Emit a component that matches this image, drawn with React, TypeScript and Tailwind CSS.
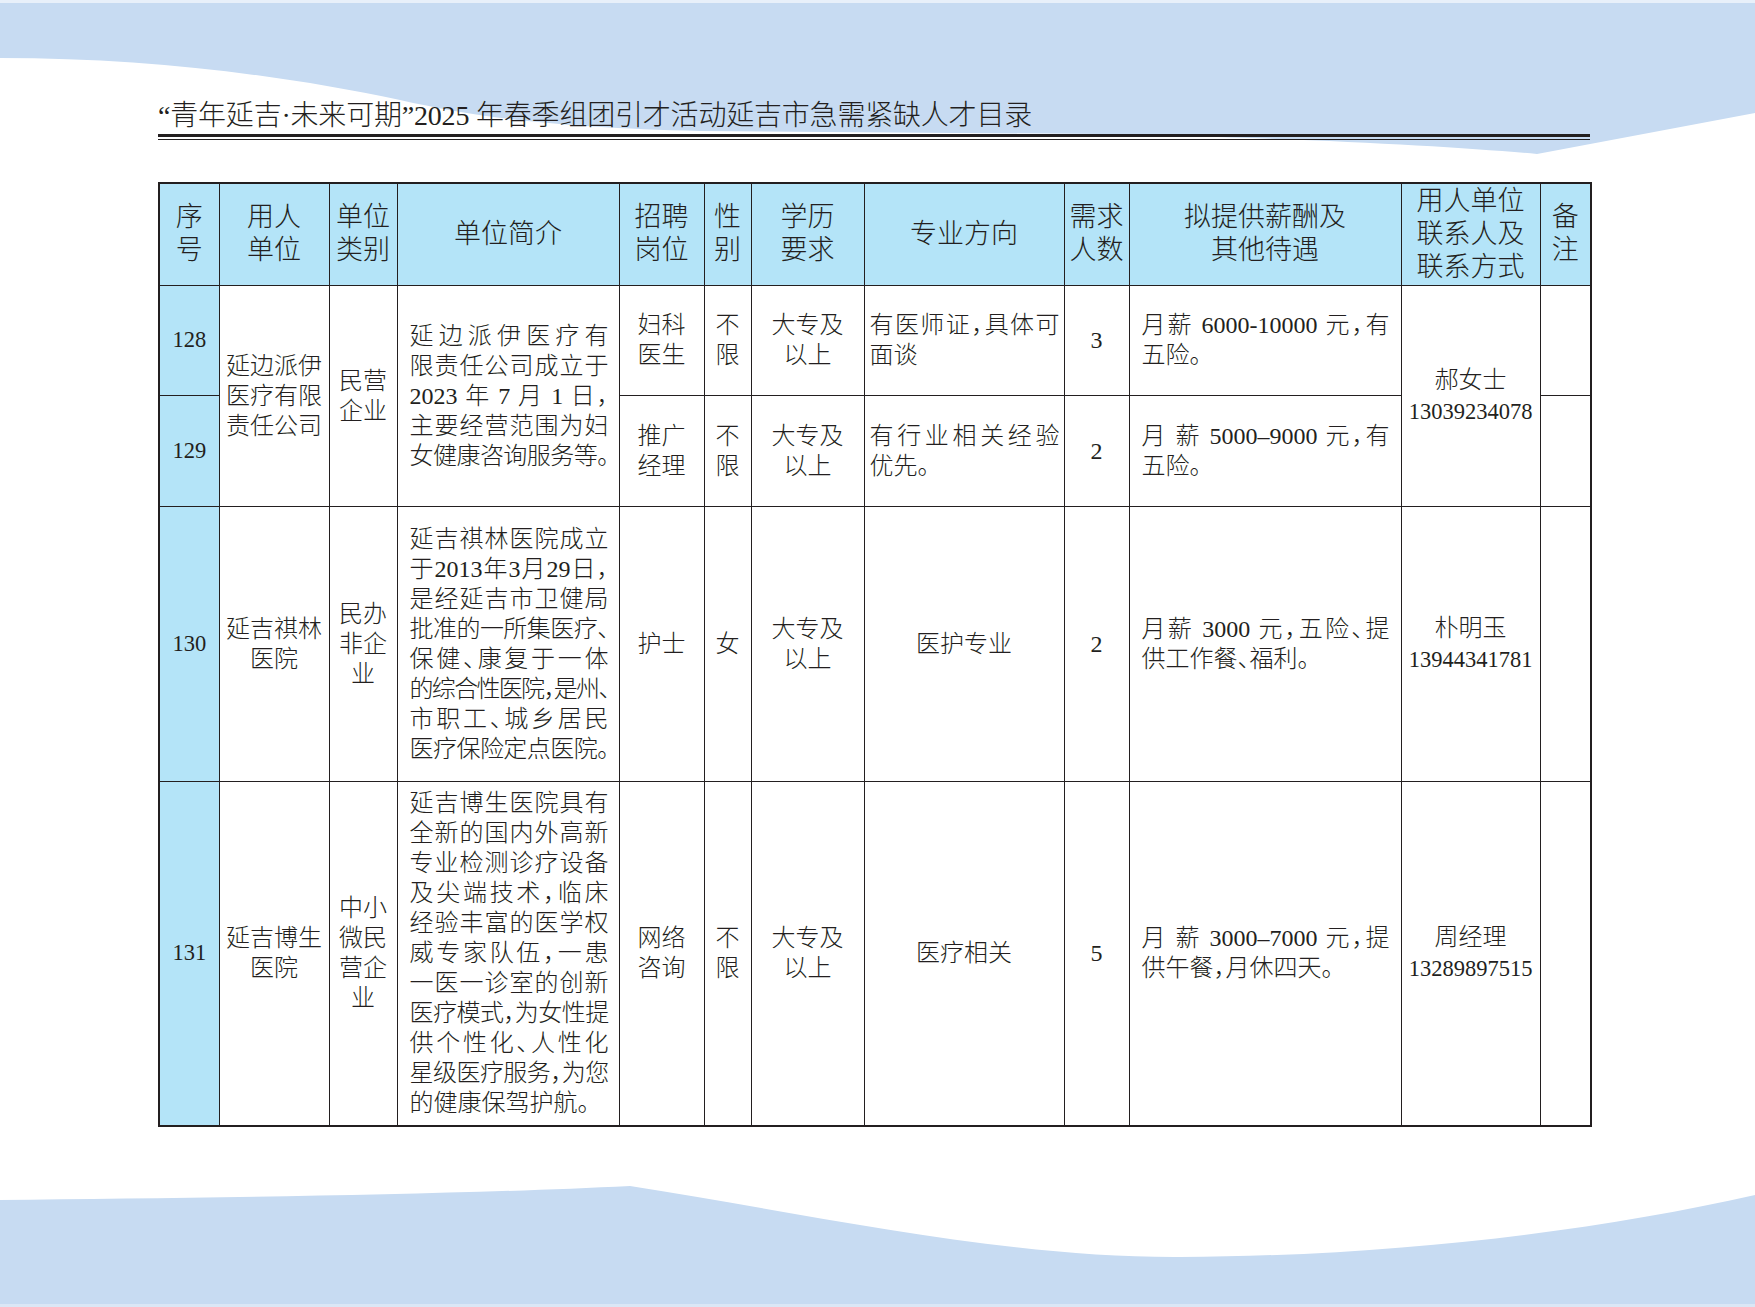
import React from "react";

const FONT = "[font-family:'Liberation_Serif','Noto_Sans_CJK_SC',serif]";
const BD = "border border-[#231f20]";
const HD = `bg-[#b4e4f8] text-[27px] leading-[33px] text-center align-middle p-0 font-light ${BD}`;
const TD = `text-[24px] leading-[30px] text-center align-middle p-0 ${BD}`;
const NUM = `bg-[#b4e4f8] text-[22.5px] leading-[30px] text-center align-middle p-0 ${BD}`;

function J({ children, t = "", last = false }: { children: React.ReactNode; t?: string; last?: boolean }) {
  return (
    <div className={`whitespace-nowrap ${last ? "text-left" : "text-justify [text-align-last:justify]"} ${t}`}>
      {children}
    </div>
  );
}

function Desc({ children, rowSpan }: { children: React.ReactNode; rowSpan?: number }) {
  return (
    <td rowSpan={rowSpan} className={`${TD} text-left`}>
      <div className="ml-[12px] w-[199px] [font-feature-settings:'halt']">{children}</div>
    </td>
  );
}

function Major({ children }: { children: React.ReactNode }) {
  return (
    <td className={`${TD} text-left`}>
      <div className="ml-[5px] w-[190px] [font-feature-settings:'halt']">{children}</div>
    </td>
  );
}

function Salary({ children }: { children: React.ReactNode }) {
  return (
    <td className={`${TD} text-left`}>
      <div className="ml-[12px] w-[248px] [font-feature-settings:'halt']">{children}</div>
    </td>
  );
}

function Contact({ name, phone, rowSpan }: { name: string; phone: string; rowSpan?: number }) {
  return (
    <td rowSpan={rowSpan} className={`${TD} leading-[31px]`}>
      <div>{name}</div>
      <div className="text-[22.5px]">{phone}</div>
    </td>
  );
}

export default function App() {
  return (
    <div className={`relative w-[1755px] h-[1307px] overflow-hidden bg-white text-[#231f20] font-light ${FONT}`}>
      <svg className="absolute inset-0 w-full h-full" viewBox="0 0 1755 1307" preserveAspectRatio="none">
        <rect x="0" y="0" width="1755" height="3" fill="#e8f0fa" />
        <path
          d="M0,3 L1755,3 L1755,113 L1537,154 C1450,146 1300,138 1100,134 L700,131 C560,128 480,118 400,100 C280,75 150,58 0,58 Z"
          fill="#c7dbf2"
        />
        <path
          d="M0,1200 C200,1198 450,1195 630,1186 C800,1212 1000,1258 1180,1257 C1400,1256 1600,1230 1755,1195 L1755,1304 L0,1304 Z"
          fill="#c7dbf2"
        />
        <rect x="0" y="1304" width="1755" height="3" fill="#dbe7f6" />
      </svg>

      <div className="relative pl-[158px] pt-[98px]">
        <div className="w-[1432px]">
          <h1 className="text-[28px] leading-[36px] font-light whitespace-nowrap tracking-[-0.2px]">
            “青年延吉·未来可期”2025 年春季组团引才活动延吉市急需紧缺人才目录
          </h1>
          <div className="h-[3px] bg-[#231f20]" />
          <div className="h-px mt-[2px] bg-[#231f20]" />
        </div>

        <table className="mt-[42px] w-[1432px] table-fixed border-collapse border-2 border-[#231f20] bg-white">
          <colgroup>
            <col className="w-[60px]" />
            <col className="w-[110px]" />
            <col className="w-[68px]" />
            <col className="w-[222px]" />
            <col className="w-[85px]" />
            <col className="w-[47px]" />
            <col className="w-[113px]" />
            <col className="w-[200px]" />
            <col className="w-[65px]" />
            <col className="w-[272px]" />
            <col className="w-[139px]" />
            <col className="w-[51px]" />
          </colgroup>
          <thead>
            <tr className="h-[102px]">
              <th className={HD}>序<br />号</th>
              <th className={HD}>用人<br />单位</th>
              <th className={HD}>单位<br />类别</th>
              <th className={HD}>单位简介</th>
              <th className={HD}>招聘<br />岗位</th>
              <th className={HD}>性<br />别</th>
              <th className={HD}>学历<br />要求</th>
              <th className={HD}>专业方向</th>
              <th className={HD}>需求<br />人数</th>
              <th className={HD}>拟提供薪酬及<br />其他待遇</th>
              <th className={HD}>用人单位<br />联系人及<br />联系方式</th>
              <th className={HD}>备<br />注</th>
            </tr>
          </thead>
          <tbody>
            <tr className="h-[110px]">
              <td className={NUM}>128</td>
              <td rowSpan={2} className={TD}>延边派伊<br />医疗有限<br />责任公司</td>
              <td rowSpan={2} className={TD}>民营<br />企业</td>
              <Desc rowSpan={2}>
                <J>延边派伊医疗有</J>
                <J>限责任公司成立于</J>
                <J>2023 年 7 月 1 日，</J>
                <J>主要经营范围为妇</J>
                <J t="tracking-[-0.7px]">女健康咨询服务等。</J>
              </Desc>
              <td className={TD}>妇科<br />医生</td>
              <td className={TD}>不<br />限</td>
              <td className={TD}>大专及<br />以上</td>
              <Major>
                <J>有医师证，具体可</J>
                <J last>面谈</J>
              </Major>
              <td className={TD}>3</td>
              <Salary>
                <J>月薪 6000-10000 元，有</J>
                <J last>五险。</J>
              </Salary>
              <Contact rowSpan={2} name="郝女士" phone="13039234078" />
              <td className={TD}></td>
            </tr>
            <tr className="h-[111px]">
              <td className={NUM}>129</td>
              <td className={TD}>推广<br />经理</td>
              <td className={TD}>不<br />限</td>
              <td className={TD}>大专及<br />以上</td>
              <Major>
                <J>有行业相关经验</J>
                <J last>优先。</J>
              </Major>
              <td className={TD}>2</td>
              <Salary>
                <J>月 薪 5000–9000 元，有</J>
                <J last>五险。</J>
              </Salary>
              <td className={TD}></td>
            </tr>
            <tr className="h-[275px]">
              <td className={NUM}>130</td>
              <td className={TD}>延吉祺林<br />医院</td>
              <td className={TD}>民办<br />非企<br />业</td>
              <Desc>
                <J>延吉祺林医院成立</J>
                <J>于2013年3月29日，</J>
                <J>是经延吉市卫健局</J>
                <J t="tracking-[-0.7px]">批准的一所集医疗、</J>
                <J>保健、康复于一体</J>
                <J t="tracking-[-1.9px]">的综合性医院，是州、</J>
                <J>市职工、城乡居民</J>
                <J t="tracking-[-0.7px]">医疗保险定点医院。</J>
              </Desc>
              <td className={TD}>护士</td>
              <td className={TD}>女</td>
              <td className={TD}>大专及<br />以上</td>
              <td className={TD}>医护专业</td>
              <td className={TD}>2</td>
              <Salary>
                <J>月薪 3000 元，五险、提</J>
                <J last>供工作餐、福利。</J>
              </Salary>
              <Contact name="朴明玉" phone="13944341781" />
              <td className={TD}></td>
            </tr>
            <tr className="h-[345px]">
              <td className={NUM}>131</td>
              <td className={TD}>延吉博生<br />医院</td>
              <td className={TD}>中小<br />微民<br />营企<br />业</td>
              <Desc>
                <J>延吉博生医院具有</J>
                <J>全新的国内外高新</J>
                <J>专业检测诊疗设备</J>
                <J>及尖端技术，临床</J>
                <J>经验丰富的医学权</J>
                <J>威专家队伍，一患</J>
                <J>一医一诊室的创新</J>
                <J t="tracking-[-0.7px]">医疗模式，为女性提</J>
                <J>供个性化、人性化</J>
                <J t="tracking-[-0.7px]">星级医疗服务，为您</J>
                <J last>的健康保驾护航。</J>
              </Desc>
              <td className={TD}>网络<br />咨询</td>
              <td className={TD}>不<br />限</td>
              <td className={TD}>大专及<br />以上</td>
              <td className={TD}>医疗相关</td>
              <td className={TD}>5</td>
              <Salary>
                <J>月 薪 3000–7000 元，提</J>
                <J last>供午餐，月休四天。</J>
              </Salary>
              <Contact name="周经理" phone="13289897515" />
              <td className={TD}></td>
            </tr>
          </tbody>
        </table>
      </div>
    </div>
  );
}
